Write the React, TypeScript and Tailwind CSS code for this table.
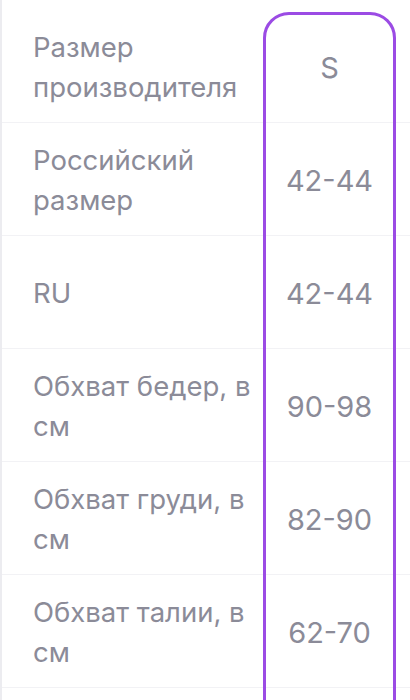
import React from "react";

const rows: { label: string; value: string }[] = [
  { label: "Размер производителя", value: "S" },
  { label: "Российский размер", value: "42-44" },
  { label: "RU", value: "42-44" },
  { label: "Обхват бедер, в см", value: "90-98" },
  { label: "Обхват груди, в см", value: "82-90" },
  { label: "Обхват талии, в см", value: "62-70" },
  { label: "", value: "" },
];

export default function App() {
  return (
    <div
      className="relative w-[410px] h-[700px] overflow-hidden bg-white"
      style={{ fontFamily: "Inter, 'Noto Sans', sans-serif" }}
    >
      <div className="absolute left-0 top-0 bottom-0 w-[2px] bg-[#ececf0]" />
      <div className="pt-[10px]">
        {rows.map((r, i) => (
          <div key={i} className="flex h-[113px] border-b border-[#f2f2f5]">
            <div className="w-[265px] shrink-0 pl-[33px] pr-[6px] pt-[2px] flex items-center text-[27.5px] leading-[40px] text-[#8b8b98]">
              {r.label}
            </div>
            <div className="w-[129px] shrink-0 pt-[4px] flex items-center justify-center text-[29px] text-[#8b8b98]">
              {r.value}
            </div>
            <div className="flex-1" />
          </div>
        ))}
      </div>
      <div className="absolute left-[263px] top-[12px] w-[133px] h-[760px] rounded-[26px] border-[3px] border-[#9b4be4]" />
    </div>
  );
}
